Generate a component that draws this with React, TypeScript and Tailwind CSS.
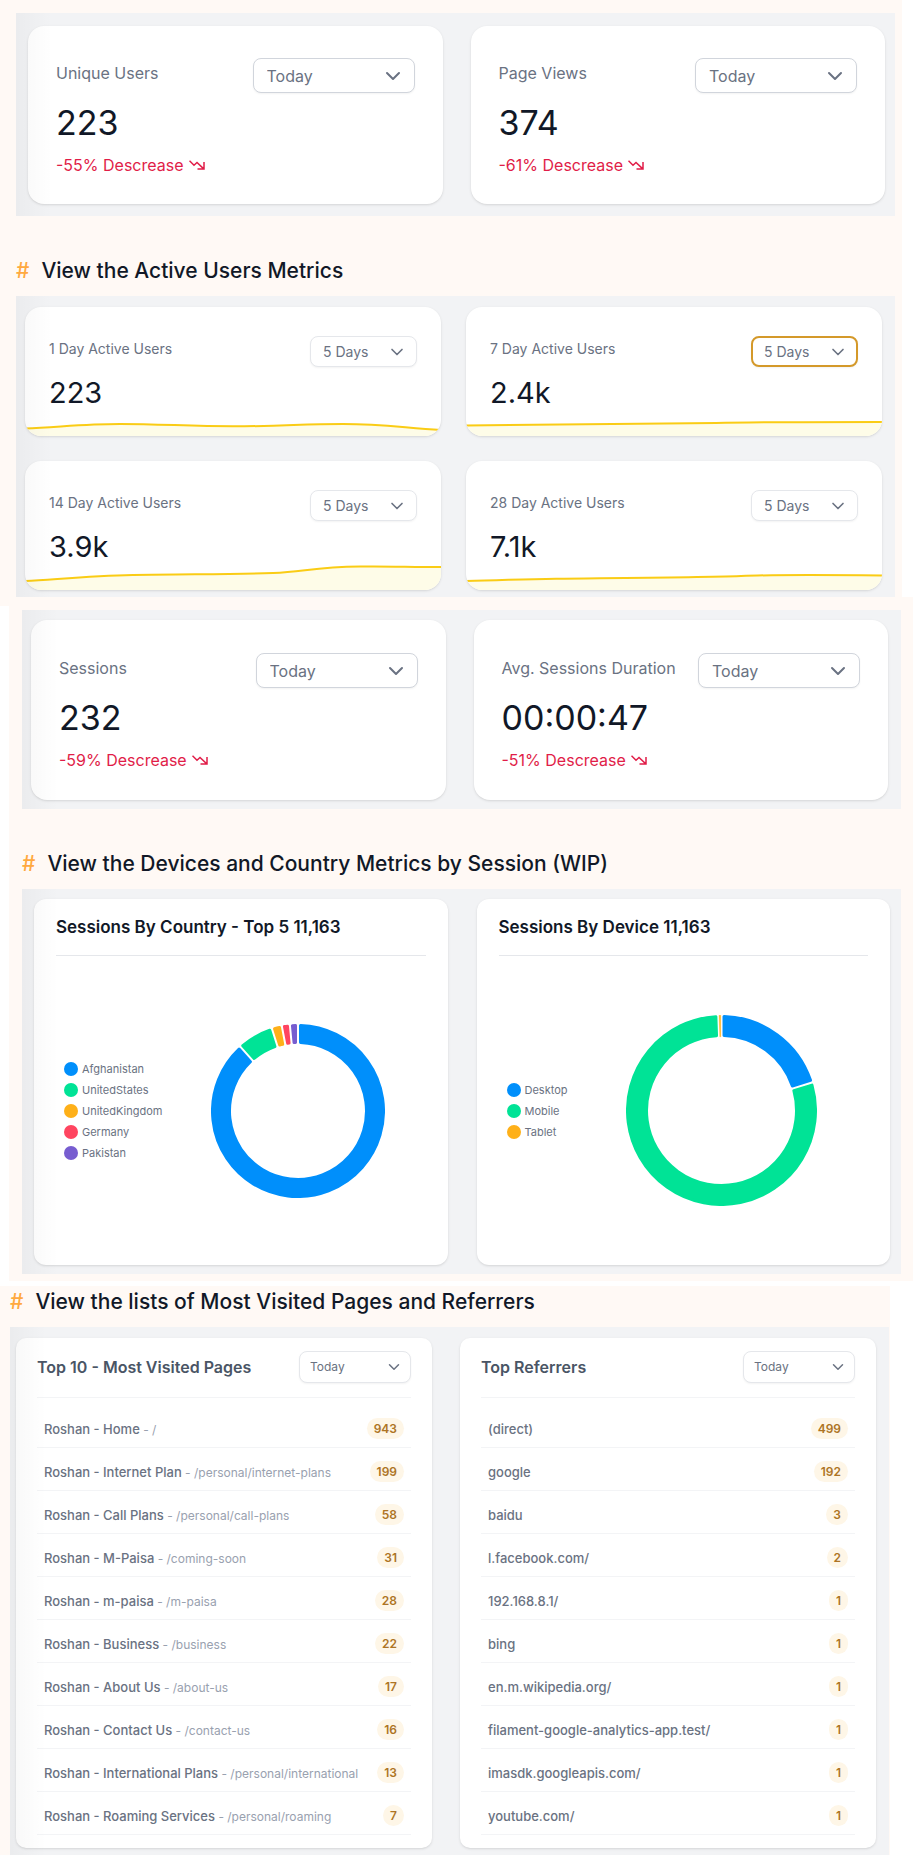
import { useId, type ReactNode } from "react";
import { ChevronDown } from "lucide-react";

type Slice = { name: string; color: string; from: number; to: number };

const countries: Slice[] = [
  { name: "Afghanistan", color: "#008ffb", from: 0, to: 318.1 },
  { name: "UnitedStates", color: "#00e396", from: 318.1, to: 342.4 },
  { name: "UnitedKingdom", color: "#feb019", from: 342.4, to: 349.2 },
  { name: "Germany", color: "#ff4560", from: 349.2, to: 354.6 },
  { name: "Pakistan", color: "#775dd0", from: 354.6, to: 360 },
];

const devices: Slice[] = [
  { name: "Desktop", color: "#008ffb", from: 0, to: 72.8 },
  { name: "Mobile", color: "#00e396", from: 72.8, to: 358.1 },
  { name: "Tablet", color: "#feb019", from: 358.1, to: 360 },
];

const pages: [string, string, string][] = [
  ["Roshan - Home", "/", "943"],
  ["Roshan - Internet Plan", "/personal/internet-plans", "199"],
  ["Roshan - Call Plans", "/personal/call-plans", "58"],
  ["Roshan - M-Paisa", "/coming-soon", "31"],
  ["Roshan - m-paisa", "/m-paisa", "28"],
  ["Roshan - Business", "/business", "22"],
  ["Roshan - About Us", "/about-us", "17"],
  ["Roshan - Contact Us", "/contact-us", "16"],
  ["Roshan - International Plans", "/personal/international", "13"],
  ["Roshan - Roaming Services", "/personal/roaming", "7"],
];

const referrers: [string, string, string][] = [
  ["(direct)", "", "499"],
  ["google", "", "192"],
  ["baidu", "", "3"],
  ["l.facebook.com/", "", "2"],
  ["192.168.8.1/", "", "1"],
  ["bing", "", "1"],
  ["en.m.wikipedia.org/", "", "1"],
  ["filament-google-analytics-app.test/", "", "1"],
  ["imasdk.googleapis.com/", "", "1"],
  ["youtube.com/", "", "1"],
];

function Heading({ children, className }: { children: ReactNode; className: string }) {
  return (
    <h2 className={`flex items-center gap-3 text-[21px] leading-7 font-medium text-[#111827] ${className}`}>
      <span className="text-[#ffa940]">#</span>
      <span>{children}</span>
    </h2>
  );
}

function Panel({ children, className }: { children: ReactNode; className: string }) {
  return (
    <div
      className={`relative grid grid-cols-2 bg-[#f2f3f5] before:pointer-events-none before:absolute before:inset-y-0 before:left-0 before:z-10 before:w-9 before:bg-linear-to-r before:from-black/3 before:to-transparent ${className}`}
    >
      {children}
    </div>
  );
}

function Select({ id, value, className, iconClass, label }: { id: string; value: string; className: string; iconClass: string; label?: string }) {
  return (
    <div className="relative shrink-0">
      <select
        id={id}
        aria-label={label}
        defaultValue={value}
        className={`block appearance-none bg-white text-gray-500 shadow-xs outline-none ${className}`}
      >
        <option>{value}</option>
        <option>Yesterday</option>
        <option>Last Week</option>
      </select>
      <ChevronDown strokeWidth={2} className={`pointer-events-none absolute top-1/2 -translate-y-1/2 text-gray-500 ${iconClass}`} />
    </div>
  );
}

function TrendDown() {
  return (
    <svg viewBox="0 0 16 10" className="h-[10px] w-4" fill="none" stroke="currentColor" strokeWidth="1.5" aria-hidden="true">
      <path d="M0.5 0.8L5 5.2L8 2.5L14.5 8.6M15 2V9H8.5" />
    </svg>
  );
}

function StatCard({ label, value, change, className = "" }: { label: string; value: string; change: string; className?: string }) {
  const id = useId();
  return (
    <section className={`flex flex-col justify-center rounded-2xl bg-white px-7 pt-8 pb-[27px] shadow-sm ${className}`}>
      <div className="flex items-start justify-between">
        <label htmlFor={id} className="pt-[3px] text-base leading-6 whitespace-nowrap text-gray-500">
          {label}
        </label>
        <Select
          id={id}
          value="Today"
          className="h-[35px] w-[162px] rounded-lg border border-gray-300 px-[13px] text-base"
          iconClass="right-[10px] size-6"
        />
      </div>
      <p className="mt-[10px] text-[34px] leading-10 text-[#111827]">{value}</p>
      <p className="mt-[10px] flex items-center gap-[5px] text-base leading-6 text-[#e11d48]">
        {change} Descrease <TrendDown />
      </p>
    </section>
  );
}

function ActiveCard({ label, value, line, focused = false }: { label: string; value: string; line: string; focused?: boolean }) {
  const id = useId();
  return (
    <section className="overflow-hidden rounded-2xl bg-white pt-[29px] shadow-sm">
      <div className="flex items-start justify-between px-6">
        <label htmlFor={id} className="pt-[3px] text-sm leading-5 text-gray-500">
          {label}
        </label>
        <Select
          id={id}
          value="5 Days"
          className={`h-[31px] w-[107px] rounded-lg px-3 text-sm ${focused ? "border-2 border-[#d4992a] pl-[11px]" : "border border-gray-200"}`}
          iconClass="right-[10px] size-5"
        />
      </div>
      <p className="mt-2 px-6 text-[29px] leading-9 text-[#111827]">{value}</p>
      <svg viewBox="0 0 416 25" preserveAspectRatio="none" className="block h-[25px] w-full" aria-hidden="true">
        <path d={`${line} V25 H0 Z`} fill="#fefce8" />
        <path d={line} fill="none" stroke="#facc15" strokeWidth="2" />
      </svg>
    </section>
  );
}

function slicePath(from: number, to: number, inner: number, outer: number, pad: number) {
  const point = (r: number, degrees: number, side: number) => {
    const a = (degrees * Math.PI) / 180 + (side * pad) / r;
    return `${(r * Math.sin(a)).toFixed(2)} ${(-r * Math.cos(a)).toFixed(2)}`;
  };
  const large = to - from > 180 ? 1 : 0;
  return `M${point(outer, from, 1)} A${outer} ${outer} 0 ${large} 1 ${point(outer, to, -1)} L${point(inner, to, -1)} A${inner} ${inner} 0 ${large} 0 ${point(inner, from, 1)} Z`;
}

function Donut({ slices, outer, inner, className }: { slices: Slice[]; outer: number; inner: number; className: string }) {
  return (
    <svg viewBox={`${-outer} ${-outer} ${outer * 2} ${outer * 2}`} className={`shrink-0 ${className}`} role="img" aria-label="Share of sessions">
      {slices.map((s) => {
        const thin = s.to - s.from < 3;
        const width = thin ? 0.4 : 3;
        return (
          <path
            key={s.name}
            d={slicePath(s.from, s.to, inner + width / 2, outer - width / 2, thin ? 0.8 : 1 + width / 2)}
            fill={s.color}
            stroke={s.color}
            strokeWidth={width}
            strokeLinejoin="round"
          />
        );
      })}
    </svg>
  );
}

function SessionCard({ title, slices, children }: { title: string; slices: Slice[]; children: ReactNode }) {
  return (
    <section className="rounded-xl bg-white px-[22px] pt-[14px] shadow-sm">
      <h3 className="border-b border-gray-200 pb-[14px] text-[17px] leading-7 font-semibold whitespace-nowrap text-[#111827]">{title}</h3>
      <div className="flex h-[309px] items-center">
        <ul className="flex flex-col gap-[7px] pl-2">
          {slices.map((s) => (
            <li key={s.name} className="flex items-center gap-1 text-[11px] leading-[14px] text-gray-500">
              <span className="size-[14px] rounded-full" style={{ backgroundColor: s.color }} />
              {s.name}
            </li>
          ))}
        </ul>
        <div className="flex flex-1 justify-center pl-2">{children}</div>
      </div>
    </section>
  );
}

function ListCard({ title, rows }: { title: string; rows: [string, string, string][] }) {
  const id = useId();
  return (
    <section className="min-w-0 rounded-[10px] bg-white px-[21px] pt-[13px] pb-[13px] shadow-sm">
      <div className="flex items-center justify-between border-b border-gray-100 pb-[14px]">
        <h3 className="text-base font-semibold whitespace-nowrap text-gray-600">{title}</h3>
        <Select
          id={id}
          label={title}
          value="Today"
          className="h-8 w-28 rounded-lg border border-gray-200 px-[10px] text-xs"
          iconClass="right-2 size-[18px]"
        />
      </div>
      <ul className="pt-[7px]">
        {rows.map(([name, path, count]) => (
          <li key={name} className="flex h-[43px] items-center justify-between border-b border-gray-100 px-[7px] pt-[5px]">
            <span className="pt-[2px] text-[13px] font-medium whitespace-nowrap text-gray-500">
              {name}
              {path && <span className="text-xs font-normal text-gray-400"> - {path}</span>}
            </span>
            <span className="rounded-full bg-[#fef6e7] px-[7px] text-xs leading-[21px] font-semibold text-[#ad7424]">{count}</span>
          </li>
        ))}
      </ul>
    </section>
  );
}

export default function App() {
  return (
    <main className="bg-white font-['Inter',sans-serif]">
      <div className="mr-3 bg-[#fff9f5] pt-[13px] pr-[7px] pb-[9px] pl-4">
        <Panel className="gap-7 pt-[13px] pr-[10px] pb-3 pl-3">
          <StatCard label="Unique Users" value="223" change="-55%" />
          <StatCard label="Page Views" value="374" change="-61%" />
        </Panel>
        <Heading className="pt-[41px] pb-[11px]">View the Active Users Metrics</Heading>
        <Panel className="gap-[25px] pt-[11px] pr-[13px] pb-[7px] pl-[9px]">
          <ActiveCard label="1 Day Active Users" value="223" line="M0 17.5C35 16 60 13 95 13C135 13 165 15.3 208 15.3C260 15.3 275 13 318 13C358 13 380 17 416 19" />
          <ActiveCard label="7 Day Active Users" value="2.4k" focused line="M0 14.5C100 13 200 13 250 12C290 11 320 11 416 11" />
          <ActiveCard label="14 Day Active Users" value="3.9k" line="M0 16C35 14 65 11 108 10C160 9 205 9.5 248 8C280 6.5 290 2 335 1.5C360 1 385 2 416 2" />
          <ActiveCard label="28 Day Active Users" value="7.1k" line="M0 16C35 15.5 55 14 90 13.7C150 13 230 12.5 275 11C310 9.5 330 9.5 416 10.5" />
        </Panel>
      </div>

      <div className="relative -mt-[9px] mr-px ml-[9px] bg-[#fff9f5] pt-[13px] pr-3 pb-[7px] pl-[13px]">
        <Panel className="gap-7 pt-[10px] pr-[13px] pb-[9px] pl-[9px]">
          <StatCard className="min-h-[180px]" label="Sessions" value="232" change="-59%" />
          <StatCard className="min-h-[180px]" label="Avg. Sessions Duration" value="00:00:47" change="-51%" />
        </Panel>
        <Heading className="pt-[41px] pb-[11px]">View the Devices and Country Metrics by Session (WIP)</Heading>
        <Panel className="gap-[29px] pt-[10px] pr-[11px] pb-[9px] pl-3">
          <SessionCard title="Sessions By Country - Top 5 11,163" slices={countries}>
            <Donut slices={countries} outer={87} inner={67} className="size-[174px]" />
          </SessionCard>
          <SessionCard title="Sessions By Device 11,163" slices={devices}>
            <Donut slices={devices} outer={95.5} inner={73.5} className="size-[191px]" />
          </SessionCard>
        </Panel>
      </div>

      <div className="mt-[5px] mr-6 bg-[#fff9f5] pt-[2px] pr-px pl-[10px]">
        <Heading className="pb-[11px]">View the lists of Most Visited Pages and Referrers</Heading>
        <Panel className="gap-7 pt-[11px] pr-[13px] pb-[7px] pl-[6px]">
          <ListCard title="Top 10 - Most Visited Pages" rows={pages} />
          <ListCard title="Top Referrers" rows={referrers} />
        </Panel>
      </div>
    </main>
  );
}
